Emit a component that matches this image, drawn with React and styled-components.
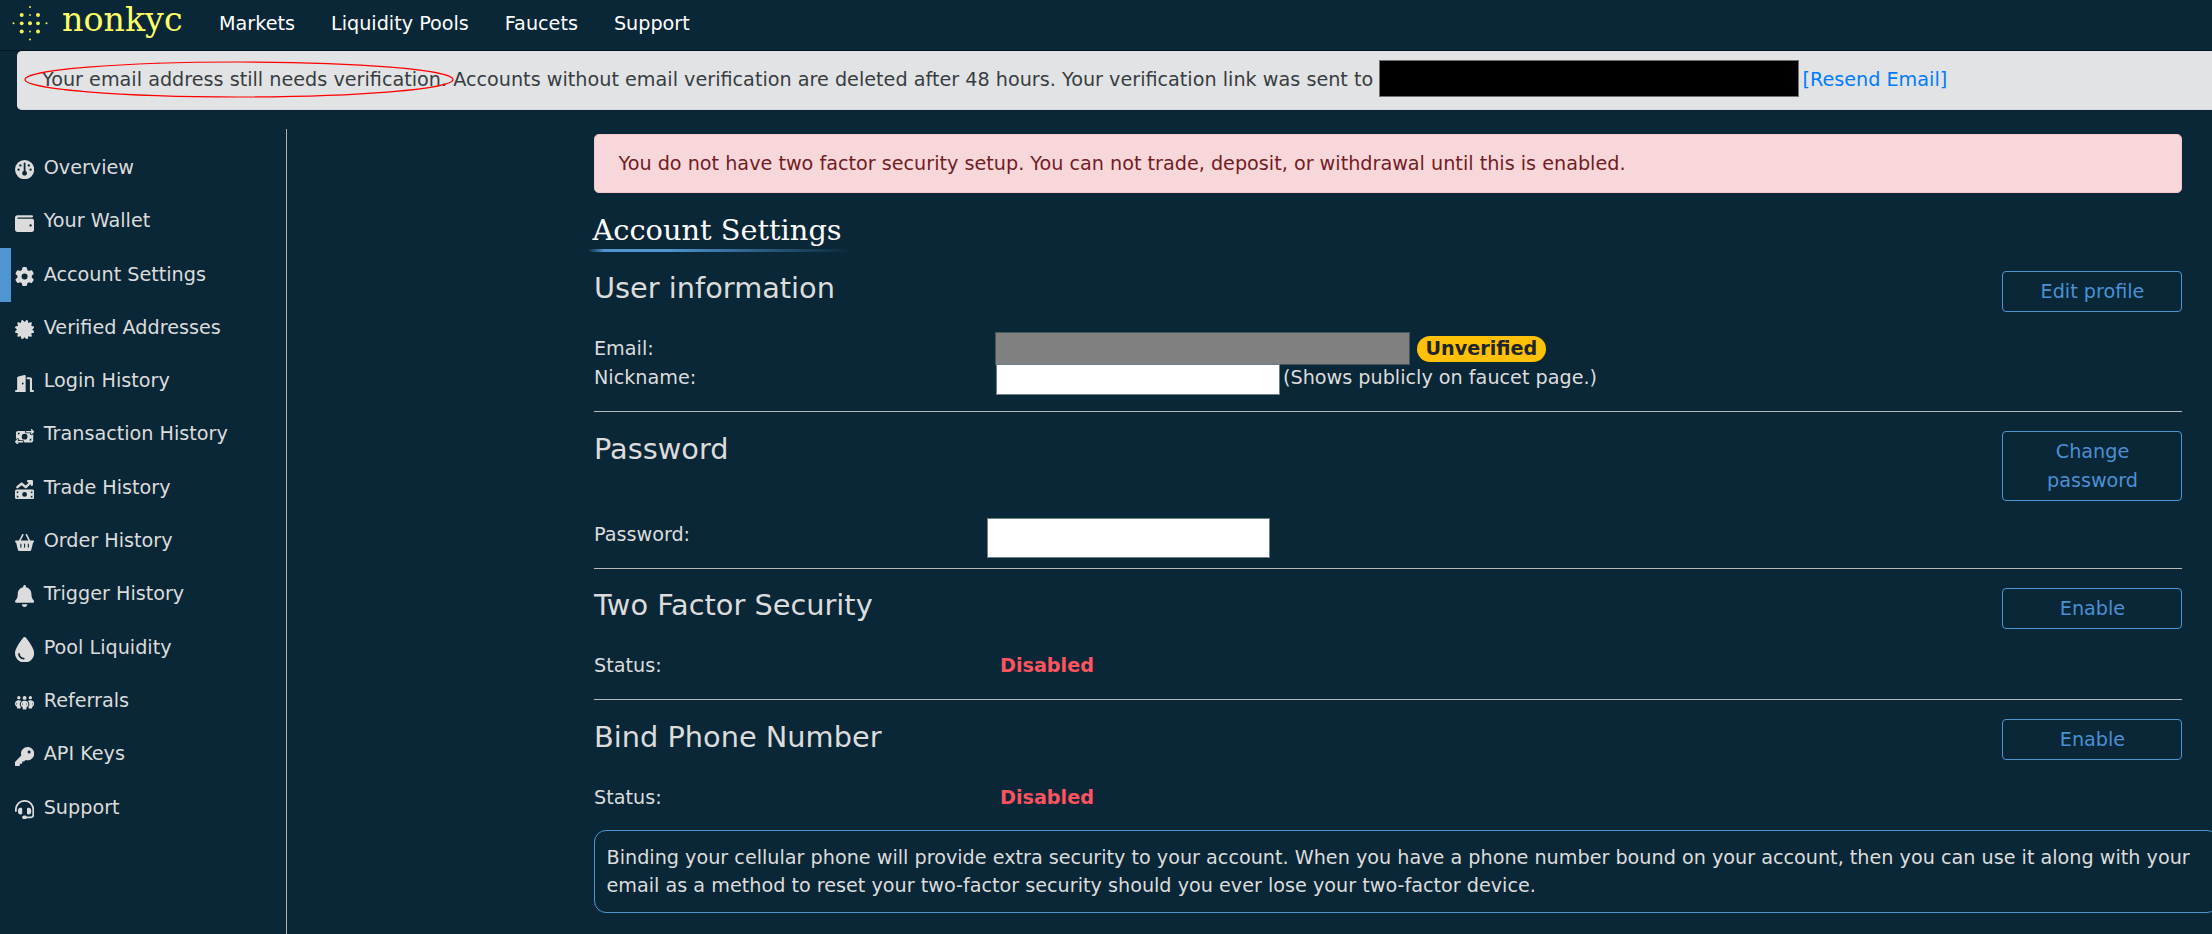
import React from "react";
import styled, { createGlobalStyle } from "styled-components";
import {
  FaGauge, FaWallet, FaGear, FaCertificate, FaDoorOpen, FaMoneyBillTransfer,
  FaMoneyBillTrendUp, FaBasketShopping, FaBell, FaDroplet, FaPeopleGroup, FaKey, FaHeadset,
} from "react-icons/fa6";

const GlobalStyle = createGlobalStyle`
  *, *::before, *::after { box-sizing: border-box; }
  body {
    margin: 0;
    background: #0a2737;
    color: #dcdcdc;
    font: 19.2px/28.8px "DejaVu Sans", sans-serif;
    overflow: hidden;
  }
  h1, h2, p { margin: 0; font-weight: 400; }
  a { text-decoration: none; }
`;

const Page = styled.div`
  height: 934px;
  display: flex;
  flex-direction: column;
  overflow: hidden;
`;

const TopBar = styled.header`
  flex: none;
  height: 51px;
  display: flex;
  align-items: flex-start;
  padding-left: 12px;
  border-bottom: 1px solid #03141f;
`;

const LogoMark = styled.svg`
  flex: none;
  width: 36px;
  height: 36px;
  margin-top: 5px;
  fill: #f2f25c;
`;

const Brand = styled.span`
  width: 120px;
  margin-left: 14px;
  font: 33.3px/40px "DejaVu Serif", serif;
  color: #ffff66;
`;

const Nav = styled.nav`
  display: flex;
  gap: 36px;
  margin: 10px 0 0 37px;
  a { color: #fff; }
`;

const VerifyBanner = styled.div`
  position: relative;
  flex: none;
  display: flex;
  align-items: center;
  width: 2212px;
  height: 59px;
  margin-left: 17px;
  padding-left: 25px;
  border: solid #d6d8db;
  border-width: 0 0 1px;
  border-radius: 4.8px;
  background: #e2e3e5;
  color: #383d41;
  white-space: pre;
  word-spacing: 0.04px;
`;

const Circled = styled.svg`
  position: absolute;
  left: 7px;
  top: 10px;
  width: 430px;
  height: 37px;
  fill: none;
  stroke: #ff0000;
  stroke-width: 1.2;
`;

const Mask = styled.span`
  flex: none;
  width: ${(p) => p.$w}px;
  height: ${(p) => p.$h}px;
  margin: ${(p) => p.$m || "0"};
  border: 1px solid ${(p) => p.$edge || "#6d7f88"};
  background: ${(p) => p.$fill};
`;

const ResendLink = styled.a`
  margin-left: 4px;
  color: #007bff;
`;

const Body = styled.div`
  flex: 1;
  display: flex;
  min-height: 0;
`;

const Sidebar = styled.aside`
  width: 287px;
  margin-top: 19px;
  padding-top: 12.7px;
  border-right: 1px solid #b0b0ae;
`;

const SideItem = styled.a`
  display: flex;
  align-items: center;
  height: 53.3px;
  padding-left: ${(p) => (p.$active ? 4 : 15)}px;
  border-left: ${(p) => (p.$active ? "11px solid #4e95d2" : "0")};
  color: #dcdcdc;
  svg {
    flex: none;
    width: 19.2px;
    height: ${(p) => p.$iconHeight}px;
    margin: 3px 9.5px 0 0;
  }
`;

const Main = styled.main`
  width: 1588px;
  margin: 24px 0 0 307px;
`;

const Alert = styled.div`
  height: 59px;
  padding: 15px 23.5px 0;
  border: 1px solid #f5c6cb;
  border-radius: 4.8px;
  background: #f8d7da;
  color: #721c24;
`;

const PageTitle = styled.h1`
  width: 262px;
  height: 42px;
  margin: 17px 0 0 -5px;
  padding-left: 3.5px;
  font: 28.8px/40px "DejaVu Serif", serif;
  color: #fff;
  white-space: nowrap;
  border-bottom: 3px solid;
  border-image: linear-gradient(to right, transparent, #4e95d2 6%, #4e95d2 30%, transparent) 1;
`;

const Section = styled.section`
  height: ${(p) => p.$h}px;
  padding-top: 19px;
  border-bottom: ${(p) => (p.$last ? "0" : "1px solid #b7b9b8")};
`;

const SectionHead = styled.div`
  display: flex;
  justify-content: space-between;
  align-items: flex-start;
  height: ${(p) => p.$h}px;
`;

const SectionTitle = styled.h2`
  font-size: 28.8px;
  line-height: ${(p) => (p.$low ? 36 : 34)}px;
`;

const OutlineButton = styled.button`
  width: 180px;
  padding: 6px 19px 4px 20px;
  border: 1px solid #4e95d2;
  border-radius: 4px;
  background: transparent;
  color: #4a90d3;
  font: inherit;
`;

const Row = styled.div`
  display: flex;
  align-items: center;
  height: 29px;
  padding-top: 2px;
`;

const Label = styled.span`
  width: ${(p) => p.$w}px;
  flex: none;
`;

const Badge = styled.span`
  height: 26px;
  margin: 0 0 2px 7px;
  padding: 0 8.5px;
  border-radius: 13px;
  background: #ffc107;
  color: #212529;
  font-weight: 700;
  line-height: 25px;
`;

const Disabled = styled.b`
  color: #ff535f;
`;

const Info = styled.p`
  width: 1625px;
  height: 83px;
  margin-top: 19px;
  padding: 13px 12px 0 11.5px;
  border: 1px solid #4e95d2;
  border-radius: 12px;
  line-height: 28px;
`;

const sideItems = [
  [FaGauge, "Overview", 19.2],
  [FaWallet, "Your Wallet", 19.2],
  [FaGear, "Account Settings", 19.2],
  [FaCertificate, "Verified Addresses", 19.2],
  [FaDoorOpen, "Login History", 17],
  [FaMoneyBillTransfer, "Transaction History", 15.4],
  [FaMoneyBillTrendUp, "Trade History", 19.2],
  [FaBasketShopping, "Order History", 17],
  [FaBell, "Trigger History", 22],
  [FaDroplet, "Pool Liquidity", 25.6],
  [FaPeopleGroup, "Referrals", 15.4],
  [FaKey, "API Keys", 19.2],
  [FaHeadset, "Support", 19.2],
];

const dots = [
  [18, 2, 1], [18, 34.5, 1], [1.5, 18.3, 1], [34.5, 18.3, 1],
  [9.7, 10, 2], [26, 10, 2], [9.7, 26.5, 2], [26, 26.5, 2],
  [9.7, 18.3, 1.9], [18, 18.3, 2], [26, 18.3, 1.9], [18, 10, 0.9], [18, 26.5, 0.9],
];

export default function App() {
  return (
    <Page>
      <GlobalStyle />
      <TopBar>
        <LogoMark viewBox="0 0 36 36">
          {dots.map(([x, y, r]) => <circle key={x + "-" + y} cx={x} cy={y} r={r} />)}
        </LogoMark>
        <Brand>nonkyc</Brand>
        <Nav>
          {["Markets", "Liquidity Pools", "Faucets", "Support"].map((t) => <a key={t}>{t}</a>)}
        </Nav>
      </TopBar>
      <VerifyBanner>
        Your email address still needs verification. Accounts without email verification are deleted after 48 hours. Your verification link was sent to{" "}
        <Mask $w={420} $h={37} $fill="#000" $edge="#707172" $m="0 -1px 3px 0" />
        <ResendLink>[Resend Email]</ResendLink>
        <Circled viewBox="0 0 430 37"><ellipse cx="215" cy="18.5" rx="214" ry="17.5" /></Circled>
      </VerifyBanner>
      <Body>
        <Sidebar>
          {sideItems.map(([Icon, text, iconHeight]) => (
            <SideItem key={text} $iconHeight={iconHeight} $active={text === "Account Settings"}>
              <Icon />{text}
            </SideItem>
          ))}
        </Sidebar>
        <Main>
          <Alert>You do not have two factor security setup. You can not trade, deposit, or withdrawal until this is enabled.</Alert>
          <PageTitle>Account Settings</PageTitle>
          <Section $h={160}>
            <SectionHead $h={63}>
              <SectionTitle>User information</SectionTitle>
              <OutlineButton>Edit profile</OutlineButton>
            </SectionHead>
            <Row>
              <Label $w={401}>Email:</Label>
              <Mask $w={415} $h={33} $fill="#808080" $edge="#45565f" $m="0 0 2px" />
              <Badge>Unverified</Badge>
            </Row>
            <Row>
              <Label $w={402}>Nickname:</Label>
              <Mask $w={284} $h={31} $fill="#fff" $m="2px 3px 0 0" />
              (Shows publicly on faucet page.)
            </Row>
          </Section>
          <Section $h={157}>
            <SectionHead $h={89}>
              <SectionTitle $low>Password</SectionTitle>
              <OutlineButton>Change password</OutlineButton>
            </SectionHead>
            <Row>
              <Label $w={393}>Password:</Label>
              <Mask $w={283} $h={40} $fill="#fff" $m="4px 0 0" />
            </Row>
          </Section>
          <Section $h={131}>
            <SectionHead $h={63}>
              <SectionTitle>Two Factor Security</SectionTitle>
              <OutlineButton>Enable</OutlineButton>
            </SectionHead>
            <Row><Label $w={406}>Status:</Label><Disabled>Disabled</Disabled></Row>
          </Section>
          <Section $h={111} $last>
            <SectionHead $h={64}>
              <SectionTitle $low>Bind Phone Number</SectionTitle>
              <OutlineButton>Enable</OutlineButton>
            </SectionHead>
            <Row><Label $w={406}>Status:</Label><Disabled>Disabled</Disabled></Row>
          </Section>
          <Info>
            Binding your cellular phone will provide extra security to your account. When you have a phone number bound on your account, then you can use it along with your email as a method to reset your two-factor security should you ever lose your two-factor device.
          </Info>
        </Main>
      </Body>
    </Page>
  );
}
